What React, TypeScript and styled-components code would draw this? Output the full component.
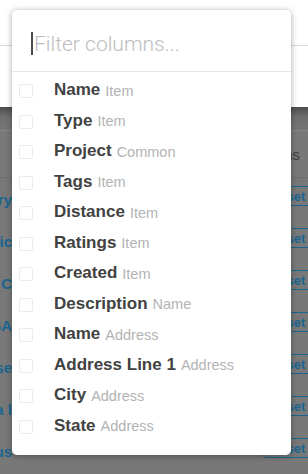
import React from "react";
import styled, { createGlobalStyle } from "styled-components";

const GlobalStyle = createGlobalStyle`
  html, body {
    margin: 0;
    padding: 0;
    background: #ffffff;
    font-family: "Liberation Sans", Arial, sans-serif;
  }
  #root {
    width: 308px;
    height: 474px;
    overflow: hidden;
  }
`;

const Page = styled.div`
  position: relative;
  width: 308px;
  height: 474px;
  display: flex;
  flex-direction: column;
  overflow: hidden;
`;

const TopBar = styled.div`
  height: 45px;
  border-bottom: 1px solid #d9d9d9;
  background: #fff;
`;

const SubBar = styled.div`
  height: 61px;
  background: #fff;
`;

const Shade = styled.div`
  flex: 1;
  background: #787878;
  display: flex;
  flex-direction: column;
`;

const ShadeToolbar = styled.div`
  height: 23px;
  background: linear-gradient(#4c4c4c, #6f6f6f 10px, #767676);
  border-bottom: 1px solid #858585;
`;

const HeadRow = styled.div`
  height: 46px;
  display: flex;
  align-items: center;
  justify-content: flex-end;
  padding-right: 8px;
  border-bottom: 1px solid #6e6e6e;
  font-size: 15px;
  color: #3e3e3e;
`;

const DataRow = styled.div`
  height: 42px;
  display: flex;
  align-items: center;
  justify-content: space-between;
`;

const NameCell = styled.div`
  width: 12px;
  overflow: hidden;
  display: flex;
  justify-content: flex-end;
  white-space: nowrap;
  font-weight: bold;
  font-size: 15px;
  color: #1b6690;
`;

const ActionButton = styled.div`
  width: 60px;
  height: 20px;
  box-sizing: border-box;
  border: 1px solid #1b6690;
  border-radius: 3px;
  display: flex;
  align-items: center;
  padding-left: 6px;
  margin-right: -15px;
  margin-top: -6px;
  font-size: 13px;
  font-weight: bold;
  color: #1b6690;
`;

const Popup = styled.div`
  position: absolute;
  left: 12px;
  top: 10px;
  width: 279px;
  height: 445px;
  background: #fff;
  border-radius: 5px;
  box-shadow: 0 1px 6px rgba(0, 0, 0, 0.35);
  display: flex;
  flex-direction: column;
  overflow: hidden;
`;

const FilterBox = styled.div`
  height: 62px;
  box-sizing: border-box;
  padding: 6px 0 0 19px;
  display: flex;
  align-items: center;
  gap: 1px;
  border-bottom: 1px solid #e6e6e6;
`;

const Caret = styled.span`
  flex-shrink: 0;
  width: 2px;
  height: 23px;
  background: #4a4a4a;
`;

const FilterInput = styled.input`
  flex: 1;
  min-width: 0;
  border: none;
  outline: none;
  padding: 0;
  font-family: Roboto, "Liberation Sans", sans-serif;
  font-weight: 300;
  font-size: 21px;
  color: #444;
  caret-color: transparent;
  background: transparent;
  &::placeholder {
    color: #bdbdbd;
  }
`;

const List = styled.div`
  padding-top: 4px;
  display: flex;
  flex-direction: column;
`;

const Option = styled.label`
  height: 30.5px;
  display: flex;
  align-items: center;
  padding-left: 7px;
`;

const Box = styled.span`
  width: 14px;
  height: 14px;
  box-sizing: border-box;
  border: 1.5px solid #ebebeb;
  border-radius: 2px;
  margin-right: 21px;
  flex-shrink: 0;
`;

const Label = styled.span`
  font-weight: bold;
  font-size: 17px;
  color: #424242;
  margin-top: -2px;
`;

const Group = styled.span`
  font-size: 14.5px;
  color: #b3b3b3;
  margin-left: 5px;
  margin-top: -1px;
`;

const columns = [
  ["Name", "Item"],
  ["Type", "Item"],
  ["Project", "Common"],
  ["Tags", "Item"],
  ["Distance", "Item"],
  ["Ratings", "Item"],
  ["Created", "Item"],
  ["Description", "Name"],
  ["Name", "Address"],
  ["Address Line 1", "Address"],
  ["City", "Address"],
  ["State", "Address"],
];

const rows = ["Category", "Public", "Common C", "USA", "House", "Alpha l", "Status"];

export default function App() {
  return (
    <Page>
      <GlobalStyle />
      <TopBar />
      <SubBar />
      <Shade>
        <ShadeToolbar />
        <HeadRow>Actions</HeadRow>
        {rows.map((r) => (
          <DataRow key={r}>
            <NameCell>{r}</NameCell>
            <ActionButton>Reset</ActionButton>
          </DataRow>
        ))}
      </Shade>
      <Popup>
        <FilterBox>
          <Caret />
          <FilterInput placeholder="Filter columns..." />
        </FilterBox>
        <List>
          {columns.map(([name, group], i) => (
            <Option key={i}>
              <Box />
              <Label>{name}</Label>
              <Group>{group}</Group>
            </Option>
          ))}
        </List>
      </Popup>
    </Page>
  );
}
